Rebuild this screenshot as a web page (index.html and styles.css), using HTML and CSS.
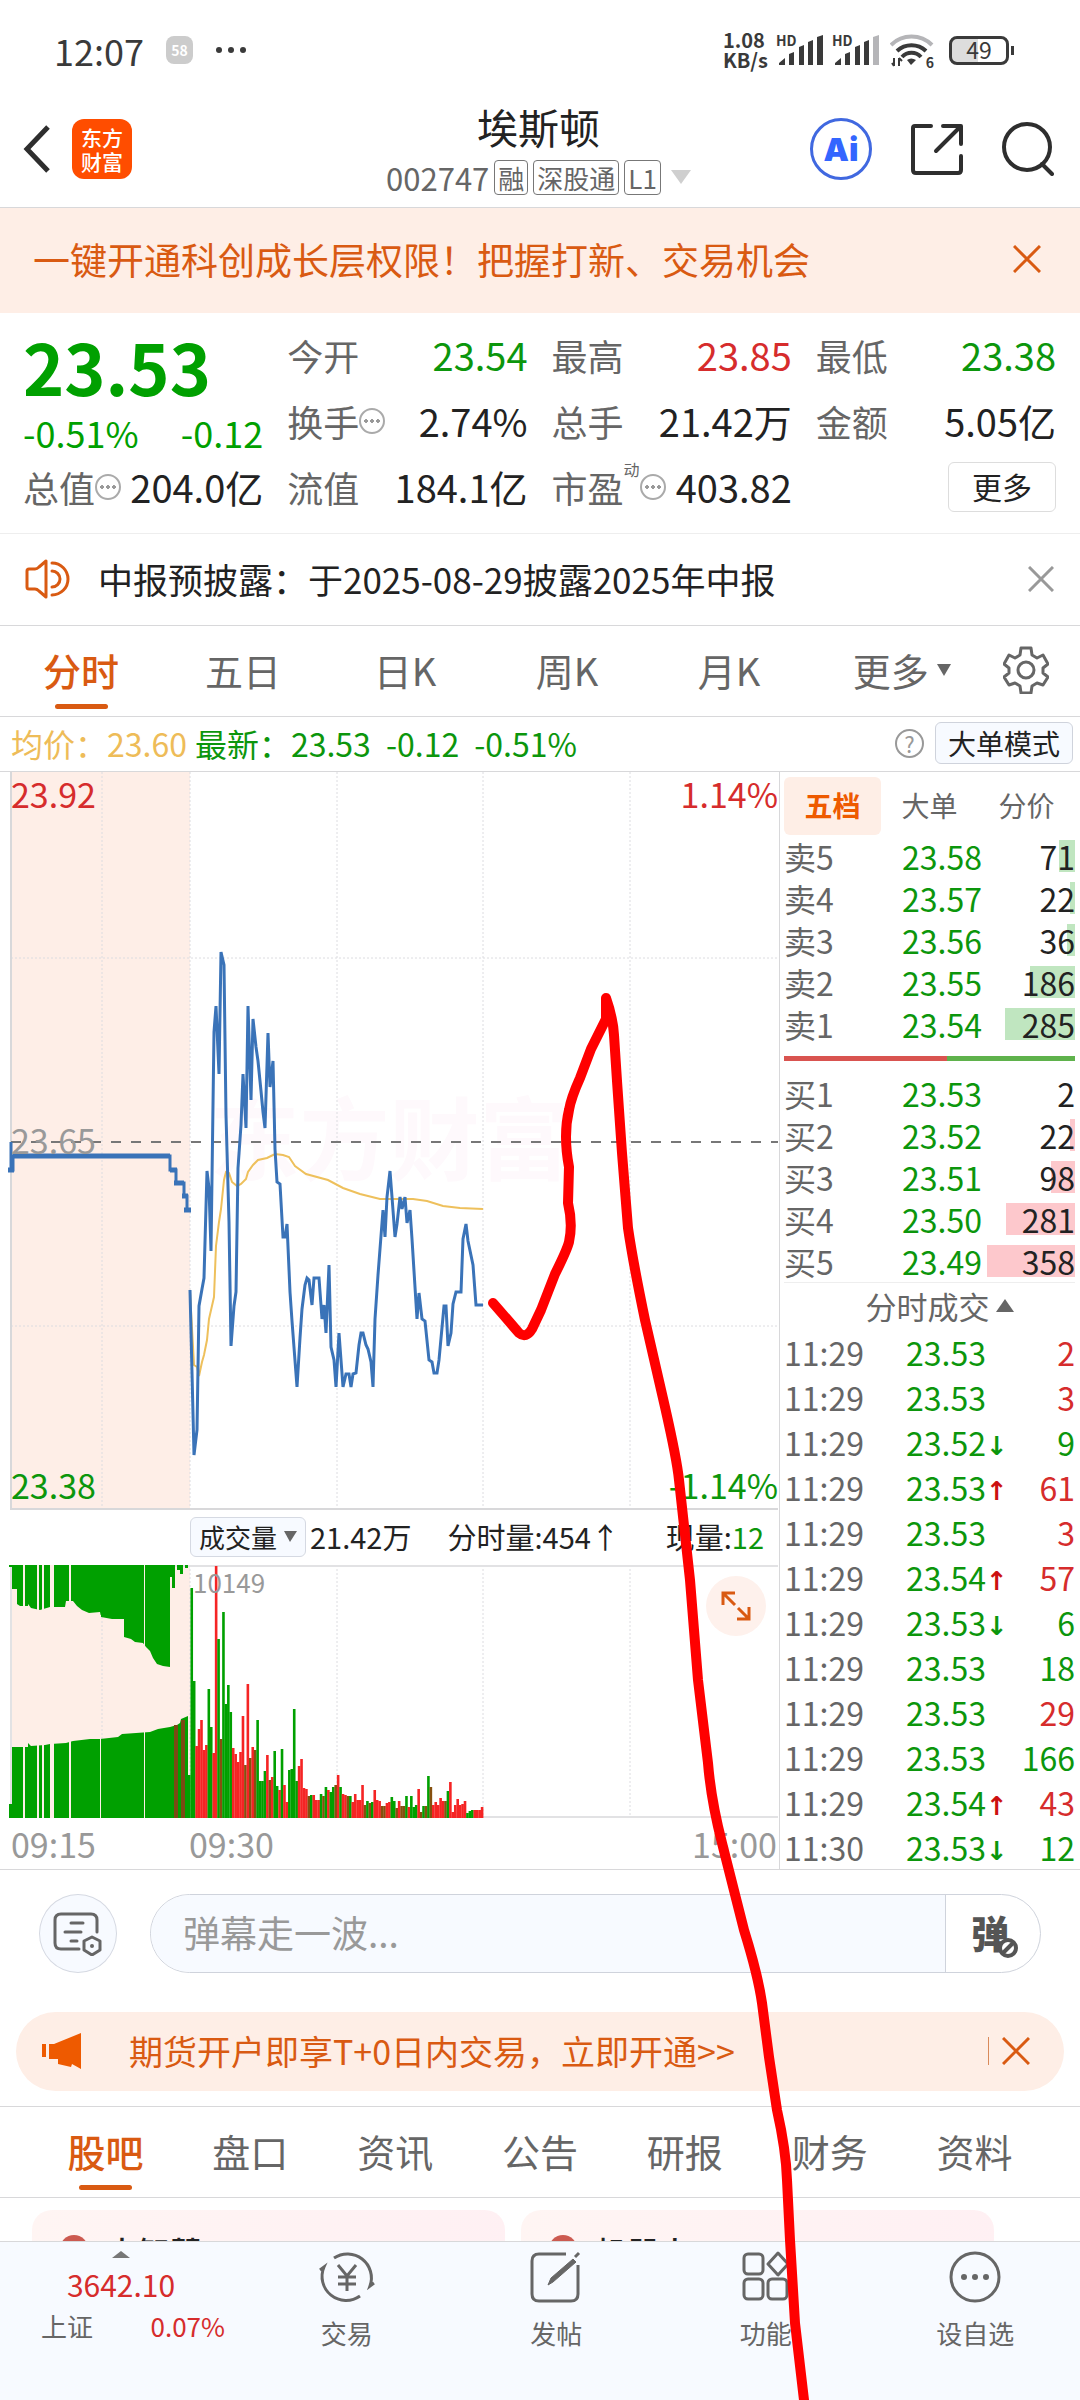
FILE: index.html
```html
<!DOCTYPE html>
<html lang="zh-CN">
<head>
    <meta charset="UTF-8">
    <meta name="viewport" content="width=device-width, initial-scale=1.0">
    <title>埃斯顿 002747</title>
    <link rel="stylesheet" href="styles.css">
</head>
<body>

<!-- Status bar -->
<div class="status">
    <div class="status-side">
        <span class="clock">12:07</span>
        <span class="app-dot">58</span>
        <svg width="32" height="8" viewBox="0 0 32 8" fill="#3a3a3a"><circle cx="4" cy="4" r="3"/><circle cx="16" cy="4" r="3"/><circle cx="28" cy="4" r="3"/></svg>
    </div>
    <div class="status-side status-right">
        <div class="net"><span>1.08</span><span>KB/s</span></div>
        <div class="signal">
            <span class="hd">HD</span>
            <svg width="46" height="30" viewBox="0 0 46 30" fill="#3a3a3a"><path d="M1 28l6-5v7h-6zM11 19l5-2v13h-5zM21 12l5-2v20h-5zM30 7l5-2v25h-5zM39 2l6-2v30h-6z"/></svg>
        </div>
        <div class="signal">
            <span class="hd">HD</span>
            <svg width="46" height="30" viewBox="0 0 46 30" fill="#3a3a3a"><path d="M1 28l6-5v7h-6zM11 19l5-2v13h-5zM21 12l5-2v20h-5zM30 7l5-2v25h-5z"/><path d="M39 2l6-2v30h-6z" fill="#b5b5b8"/></svg>
        </div>
        <div class="wifi">
            <svg width="44" height="34" viewBox="0 0 44 34" fill="none" stroke="#3a3a3a" stroke-width="4"><path d="M1 12a29 29 0 0 1 41 0" stroke="#b5b5b8"/><path d="M7 18a21 21 0 0 1 29 0"/><path d="M12 24a13 13 0 0 1 19 0"/><path d="M17 27q4-3 9 0l-5 5z" fill="#3a3a3a" stroke="none"/><path d="M4 33v-8M2 30l2 3M9 25v8M12 28l-3-3" stroke-width="2"/></svg>
            <span class="wifi-gen">6</span>
        </div>
        <div class="battery"><span>49</span></div>
    </div>
</div>

<!-- Header -->
<header class="header">
    <div class="header-left">
        <button class="plain" aria-label="返回">
            <svg width="28" height="52" viewBox="0 0 28 52" fill="none" stroke="#2e2e2e" stroke-width="5"><path d="M25 4L4 26l21 22"/></svg>
        </button>
        <a class="logo" href="#"><span>东方</span><span>财富</span></a>
    </div>
    <div class="stock">
        <h1>埃斯顿</h1>
        <div class="stock-sub">
            <span class="code">002747</span>
            <span class="tag">融</span>
            <span class="tag">深股通</span>
            <span class="tag">L1</span>
            <svg class="sub-arrow" width="20" height="14" viewBox="0 0 20 14" fill="#cfcfcf"><path d="M0 0h20L10 14z"/></svg>
        </div>
    </div>
    <div class="header-right">
        <button class="plain ai" aria-label="Ai"><span>Ai</span></button>
        <button class="plain" aria-label="分享">
            <svg width="52" height="52" viewBox="0 0 52 52" fill="none" stroke="#2e2e2e" stroke-width="4" stroke-linecap="round" stroke-linejoin="round"><path d="M20 3H4q-2 0-2 2v42q0 3 3 3h42q3 0 3-3V33"/><path d="M32 3h18v18M49 4L25 28"/></svg>
        </button>
        <button class="plain" aria-label="搜索">
            <svg width="52" height="54" viewBox="0 0 52 54" fill="none" stroke="#2e2e2e" stroke-width="4" stroke-linecap="round"><circle cx="25" cy="25" r="23"/><path d="M40 42l10 10"/></svg>
        </button>
    </div>
</header>

<!-- Promo banner -->
<div class="promo">
    <a href="#">一键开通科创成长层权限！把握打新、交易机会</a>
    <button class="plain" aria-label="关闭">
        <svg width="28" height="28" viewBox="0 0 28 28" stroke="#d95a12" stroke-width="3"><path d="M1 1l26 26M27 1L1 27"/></svg>
    </button>
</div>

<!-- Quote -->
<section class="quote">
    <div class="price-cell">
        <strong class="price">23.53</strong>
        <div class="change"><span>-0.51%</span><span>-0.12</span></div>
    </div>
    <div class="cell"><span class="label">今开</span><span class="value green">23.54</span></div>
    <div class="cell"><span class="label">最高</span><span class="value red">23.85</span></div>
    <div class="cell"><span class="label">最低</span><span class="value green">23.38</span></div>
    <div class="cell"><span class="label">换手<i class="more-dots"></i></span><span class="value">2.74%</span></div>
    <div class="cell"><span class="label">总手</span><span class="value">21.42万</span></div>
    <div class="cell"><span class="label">金额</span><span class="value">5.05亿</span></div>
    <div class="cell"><span class="label">总值<i class="more-dots"></i></span><span class="value">204.0亿</span></div>
    <div class="cell"><span class="label">流值</span><span class="value">184.1亿</span></div>
    <div class="cell"><span class="label">市盈<sup>动</sup><i class="more-dots"></i></span><span class="value">403.82</span></div>
    <div class="cell cell-end"><button class="more-btn">更多</button></div>
</section>

<!-- Notice -->
<div class="notice">
    <svg width="46" height="40" viewBox="0 0 46 40" fill="none" stroke="#d95a12" stroke-width="3" stroke-linejoin="round"><path d="M4 10h6q2 0 4-2l7-6v36l-7-6q-2-2-4-2H4q-2 0-2-2V12q0-2 2-2z"/><path d="M27 4a16 16 0 0 1 0 32" stroke-linecap="round"/><path d="M27 12a8 8 0 0 1 0 16" stroke-linecap="round"/></svg>
    <a href="#">中报预披露：于2025-08-29披露2025年中报</a>
    <button class="plain" aria-label="关闭">
        <svg width="26" height="26" viewBox="0 0 26 26" stroke="#999" stroke-width="3"><path d="M1 1l24 24M25 1L1 25"/></svg>
    </button>
</div>

<!-- Chart tabs -->
<nav class="chart-tabs">
    <a class="active" href="#">分时</a>
    <a href="#">五日</a>
    <a href="#">日K</a>
    <a href="#">周K</a>
    <a href="#">月K</a>
    <a href="#">更多<svg class="tab-arrow" width="14" height="12" viewBox="0 0 14 12" fill="#666"><path d="M0 0h14L7 12z"/></svg></a>
    <button class="plain gear" aria-label="设置">
        <svg width="46" height="48" viewBox="0 0 46 48" fill="none" stroke="#666" stroke-width="3" stroke-linejoin="round"><path d="M18 2h10l1 7 5 3 6-3 5 9-5 4v5l5 4-5 8-6-2-5 3-1 7H18l-1-7-5-3-6 2-5-8 5-4v-5l-5-4 5-9 6 3 5-3z"/><circle cx="23" cy="24" r="8"/></svg>
    </button>
</nav>

<div class="info">
    <span class="yellow">均价：23.60</span>
    <span class="green">最新：23.53</span>
    <span class="green gap">-0.12</span>
    <span class="green gap">-0.51%</span>
    <span class="help">?</span>
    <button class="mode-btn">大单模式</button>
</div>

<main class="market">
    <div class="charts">
        <div class="price-chart">
            <div class="watermark">东方财富</div>
            <svg viewBox="0 0 779 738">
                <rect x="11" y="0" width="179" height="737" fill="#feeee7"/>
                <g stroke="#dcdce0" stroke-dasharray="2 2">
                    <path d="M102 0v737M190 0v737M337 0v737M483 0v737M630 0v737M11 186h767M11 554h767"/>
                </g>
                <path d="M11 0v737h767" fill="none" stroke="#d8d8da" stroke-width="2"/>
                <path d="M11 370h767" stroke="#777" stroke-width="2" stroke-dasharray="10 10"/>
                <polyline fill="none" stroke="#eec05c" stroke-width="2" points="190,520 194,593 197,595 199,604 202,590 204,583 207,568 209,547 214,525 216,474 219,450 221,437 224,408 226,400 229,401 232,410 237,414 241,412 246,407 248,400 253,393 258,388 267,386 275,382 283,383 289,385 295,394 306,402 328,408 343,416 360,422 380,427 413,427 427,429 443,434 460,436 483,437"/>
                <polyline class="line" points="11,370 11,398 13,398 13,384 170,384 170,398 176,398 176,411 184,411 184,424 187,424 187,438"/>
                <path d="M13 384h157M8 398h6M170 398h7M174 411h10M182 424h6M184 438h7" stroke="#3a73b8" stroke-width="5" fill="none"/>
                <polyline class="line" points="190,518 194,683 197,658 199,534 202,517 204,506 207,399 209,416 211,479 214,260 216,234 219,302 221,180 224,193 226,343 229,450 231,574 234,534 236,520 238,396 241,353 243,302 246,356 248,234 251,328 253,247 256,275 258,289 261,319 263,340 265,356 268,261 270,315 273,289 275,377 277,410 280,412 283,465 285,465 287,452 290,520 292,549 297,615 300,566 302,537 305,513 307,506 309,508 312,533 314,506 319,506 322,547 324,533 326,561 329,493 331,575 334,588 336,615 339,561 343,615 346,602 349,602 351,615 353,602 356,601 359,573 361,561 363,561 366,573 368,577 371,590 373,615 375,547 378,503 383,438 385,465 387,425 390,399 392,425 395,465 397,452 400,425 402,437 405,425 407,451 410,438 412,467 417,547 419,521 422,547 425,549 429,588 432,590 434,601 437,601 439,588 444,534 446,534 448,574 451,561 453,532 456,520 461,520 463,467 466,452 468,469 473,493 476,533 483,533"/>
            </svg>
            <span class="mark top-left red">23.92</span>
            <span class="mark top-right red">1.14%</span>
            <span class="mark mid-left">23.65</span>
            <span class="mark bottom-left green">23.38</span>
            <span class="mark bottom-right green">-1.14%</span>
        </div>
        <div class="volume-info">
            <button class="volume-btn">成交量<svg width="13" height="11" viewBox="0 0 13 11" fill="#666"><path d="M0 0h13L6 11z"/></svg></button>
            <span>21.42万</span>
            <span class="minute">分时量:454↑</span>
            <span class="current">现量:<b class="green">12</b></span>
        </div>
        <div class="volume-chart">
            <svg viewBox="0 0 779 253">
                <rect x="11" y="0" width="179" height="253" fill="#feeee7"/>
                <path d="M102 0v253M190 0v253M337 0v253M483 0v253M630 0v253" stroke="#dcdce0" stroke-dasharray="2 2"/>
                <path d="M11 1h767M11 252h767M11 0v253" stroke="#e2e2e4" stroke-width="2" fill="none"/>
                <!-- call auction -->
                <g fill="#00a000">
                    <path d="M9 0v2h3v22h5v15l3 2h8v-2l3 4 9 2 10-3h15l1-6h7l4 5 5 4 7 3 11-1 1 5 11 2h12v18l7 2 4 3 8 1 3 4 4 4 3 7 4 6 6 2 7 1V12h2v11h3V0zM177 0h3v5h-3zM180 0h3v9h-3zM185 0h3v3h-3z"/>
                    <path d="M9 253v-14h3v-57h16v-4l3 3 14-1 5-1 16-1 7-2 17-2h10l18-2 4-3 28-2 8-3 12-2 7-2 3-2 1-4 7-3v102z"/>
                </g>
                <path d="M174 160h4v93h-4zM181 155h4v98h-4z" fill="#7a4a14"/>
                <path d="M23 0h2v253h-2zM37 0h2v253h-2zM42 0h2v253h-2zM50 0h4v253h-4zM69 0h2v253h-2zM144 0h1v253h-1zM100 50h1v203h-1z" fill="#feeee7"/>
                <g id="volumeBars"></g>
            </svg>
            <span class="peak">10149</span>
            <button class="plain expand" aria-label="全屏">
                <svg width="30" height="30" viewBox="0 0 30 30" fill="none" stroke="#d95a12" stroke-width="3"><path d="M2 14V2h12M2 2l12 12M28 16v12H16M28 28L17 17"/></svg>
            </button>
        </div>
        <div class="axis"><span>09:15</span><span class="open">09:30</span><span class="close">15:00</span></div>
    </div>

    <aside class="side">
        <div class="side-tabs">
            <button class="plain active">五档</button>
            <button class="plain">大单</button>
            <button class="plain">分价</button>
        </div>
        <table class="book sell">
            <tr><th>卖5</th><td>23.58</td><td><i style="width: 16px"></i><span>71</span></td></tr>
            <tr><th>卖4</th><td>23.57</td><td><i style="width: 5px"></i><span>22</span></td></tr>
            <tr><th>卖3</th><td>23.56</td><td><i style="width: 8px"></i><span>36</span></td></tr>
            <tr><th>卖2</th><td>23.55</td><td><i style="width: 45px"></i><span>186</span></td></tr>
            <tr><th>卖1</th><td>23.54</td><td><i style="width: 70px"></i><span>285</span></td></tr>
        </table>
        <div class="ratio"><div style="width: 56%"></div></div>
        <table class="book buy">
            <tr><th>买1</th><td>23.53</td><td><span>2</span></td></tr>
            <tr><th>买2</th><td>23.52</td><td><i style="width: 5px"></i><span>22</span></td></tr>
            <tr><th>买3</th><td>23.51</td><td><i style="width: 24px"></i><span>98</span></td></tr>
            <tr><th>买4</th><td>23.50</td><td><i style="width: 69px"></i><span>281</span></td></tr>
            <tr><th>买5</th><td>23.49</td><td><i style="width: 88px"></i><span>358</span></td></tr>
        </table>
        <button class="plain deals-title">分时成交<svg width="18" height="13" viewBox="0 0 18 13" fill="#666"><path d="M0 13h18L9 0z"/></svg></button>
        <table class="deals">
            <tr><th>11:29</th><td>23.53</td><td></td><td class="red">2</td></tr>
            <tr><th>11:29</th><td>23.53</td><td></td><td class="red">3</td></tr>
            <tr><th>11:29</th><td>23.52</td><td class="down"></td><td>9</td></tr>
            <tr><th>11:29</th><td>23.53</td><td class="up"></td><td class="red">61</td></tr>
            <tr><th>11:29</th><td>23.53</td><td></td><td class="red">3</td></tr>
            <tr><th>11:29</th><td>23.54</td><td class="up"></td><td class="red">57</td></tr>
            <tr><th>11:29</th><td>23.53</td><td class="down"></td><td>6</td></tr>
            <tr><th>11:29</th><td>23.53</td><td></td><td>18</td></tr>
            <tr><th>11:29</th><td>23.53</td><td></td><td class="red">29</td></tr>
            <tr><th>11:29</th><td>23.53</td><td></td><td>166</td></tr>
            <tr><th>11:29</th><td>23.54</td><td class="up"></td><td class="red">43</td></tr>
            <tr><th>11:30</th><td>23.53</td><td class="down"></td><td>12</td></tr>
        </table>
    </aside>
</main>

<!-- Bullet comments -->
<div class="danmu">
    <button class="plain danmu-set" aria-label="弹幕设置">
        <svg width="50" height="44" viewBox="0 0 50 44" fill="none" stroke="#666" stroke-width="3" stroke-linecap="round"><path d="M26 37H8q-6 0-6-6V8q0-6 6-6h30q6 0 6 6v12"/><path d="M18 11h12M12 20h16M18 29h6"/><path d="M39 25l8 4v9l-8 5-8-5v-9z" stroke-linejoin="round"/><circle cx="39" cy="34" r="2" fill="#666" stroke="none"/></svg>
    </button>
    <div class="danmu-box">
        <input type="text" placeholder="弹幕走一波..." aria-label="弹幕">
        <button class="plain danmu-switch" aria-label="关闭弹幕">弹<svg width="20" height="20" viewBox="0 0 20 20" fill="#fff" stroke="#555" stroke-width="4"><circle cx="10" cy="10" r="8"/><path d="M5 15L15 5"/></svg></button>
    </div>
</div>

<div class="futures">
    <svg width="40" height="36" viewBox="0 0 40 36" fill="#ee5a00"><path d="M0 11h4v13H0zM7 11h5L39 0v36L30 31l-1 3-13-3v-5H7z"/></svg>
    <a href="#">期货开户即享T+0日内交易，立即开通&gt;&gt;</a>
    <button class="plain" aria-label="关闭">
        <svg width="28" height="28" viewBox="0 0 28 28" stroke="#d95a12" stroke-width="3"><path d="M1 1l26 26M27 1L1 27"/></svg>
    </button>
</div>

<nav class="content-tabs">
    <a class="active" href="#">股吧</a>
    <a href="#">盘口</a>
    <a href="#">资讯</a>
    <a href="#">公告</a>
    <a href="#">研报</a>
    <a href="#">财务</a>
    <a href="#">资料</a>
</nav>

<div class="cards">
    <a class="card" href="#"><i></i>大智慧</a>
    <a class="card" href="#"><i></i>机器人</a>
</div>

<!-- Bottom bar -->
<nav class="bottom">
    <a class="index" href="#">
        <svg width="18" height="7" viewBox="0 0 18 7" fill="#777"><path d="M0 7h18L9 0z"/></svg>
        <span class="index-value">3642.10</span>
        <span class="index-row"><span>上证</span><span class="red">0.07%</span></span>
    </a>
    <a href="#">
        <svg width="58" height="52" viewBox="0 0 58 52" fill="none" stroke="#666" stroke-width="3"><path d="M16 7a24 24 0 0 1 36 28l4-3M42 45A24 24 0 0 1 6 16l-4 3"/><path d="M20 14l9 11 9-11M29 25v15M20 26h18M20 33h18"/></svg>
        交易
    </a>
    <a href="#">
        <svg width="52" height="52" viewBox="0 0 52 52" fill="none" stroke="#666" stroke-width="3"><path d="M36 3H9q-7 0-7 7v33q0 7 7 7h32q7 0 7-7V14"/><path d="M18 34l3-7L43 8l3 3-23 20z" fill="#666" stroke-width="1"/><path d="M45 6l4-4"/></svg>
        发帖
    </a>
    <a href="#">
        <svg width="48" height="52" viewBox="0 0 48 52" fill="none" stroke="#666" stroke-width="3"><rect x="2" y="3" width="19" height="20" rx="4"/><rect x="2" y="28" width="19" height="20" rx="4"/><rect x="26" y="28" width="19" height="20" rx="4"/><path d="M36 2l10 11-10 11-10-11z" stroke-linejoin="round"/></svg>
        功能
    </a>
    <a href="#">
        <svg width="52" height="52" viewBox="0 0 52 52" fill="none" stroke="#666" stroke-width="3"><circle cx="26" cy="26" r="24"/><g fill="#666" stroke="none"><circle cx="15" cy="26" r="3"/><circle cx="26" cy="26" r="3"/><circle cx="37" cy="26" r="3"/></g></svg>
        设自选
    </a>
</nav>

<!-- Hand-drawn trend -->
<div class="ink">
    <svg viewBox="0 0 1080 2400">
        <path d="M493 1303Q507 1319 519 1333Q526 1339 532 1329L541 1310L555 1274Q567 1250 569 1242Q573 1224 568 1203L569 1167Q563 1135 569 1110Q571 1098 580 1078L591 1049L606 1019L606 998Q613 1018 614 1035L617 1081L622 1153L628 1228Q633 1262 645 1320L665 1407Q677 1460 679 1480L690 1580L698 1680L708 1763Q711 1800 722 1843L744 1930Q758 1975 762 2003L769 2057L777 2110Q786 2150 787 2180L790 2240L795 2323L804 2400L806 2430"/>
    </svg>
</div>

<script>
    // one bar per minute: colour letter + height
    const volumes = "g43 g230 g137 r72 r89 r98 r68 r73 g129 g91 r65 r252 g179 b79 g206 g114 g133 g106 r70 r64 " +
        "r56 r66 r102 b53 r134 b60 r71 b68 g98 g37 g37 g47 r63 b38 r41 g67 g32 r28 g69 r33 " +
        "r16 g48 g49 g109 g37 r52 r59 r30 r29 b22 g23 r23 r18 r18 g24 b22 g31 r28 g26 g31 " +
        "b33 r43 g31 r24 r23 b22 g22 r16 r24 r18 r18 r33 b13 g17 b15 g16 r28 r18 r17 b12 " +
        "b12 r15 r16 g21 g17 b10 r17 b12 b12 g22 r11 g22 g11 g13 r29 b6 g12 b12 g42 b31 " +
        "r13 r16 r13 r20 r17 b17 g27 r36 r6 r13 r19 r13 r14 r17 g5 g7 g8 r8 r8 r8 r11";
    const colors = { g: "#00a000", r: "#f52424", b: "#85500f" };
    const group = document.getElementById("volumeBars");

    volumes.split(" ").forEach((item, i) => {
        const height = Number(item.slice(1));
        const bar = document.createElementNS("http://www.w3.org/2000/svg", "rect");
        bar.setAttribute("x", (188 + i * 2.44).toFixed(2));
        bar.setAttribute("y", 253 - height);
        bar.setAttribute("width", 2.6);
        bar.setAttribute("height", height);
        bar.setAttribute("fill", colors[item[0]]);
        group.appendChild(bar);
    });
</script>

</body>
</html>
```
FILE: styles.css
```css
* {
    box-sizing: border-box;
}

body {
    position: relative;
    min-height: 100vh;
    margin: 0;
    background-color: #fff;
    color: #222;
    font-family: "Noto Sans CJK SC", sans-serif;
    font-size: 32px;
    line-height: 1;
}

a {
    color: inherit;
    text-decoration: none;
}

button {
    font-family: inherit;
    cursor: pointer;
}

svg {
    display: block;
    flex-shrink: 0;
}

i {
    font-style: normal;
}

.plain {
    padding: 0;
    border: none;
    background: none;
    color: inherit;
}

.green {
    color: #0c960c;
}

.red {
    color: #d62c2c;
}

.yellow {
    color: #eebc58;
}

/* status bar */
.status {
    display: flex;
    justify-content: space-between;
    align-items: center;
    height: 96px;
    padding: 4px 71px 0 54px;
    color: #3a3a3a;
}

.status-side {
    display: flex;
    align-items: center;
    gap: 22px;
}

.status-right {
    gap: 10px;
}

.clock {
    font-size: 36px;
}

.app-dot {
    width: 27px;
    height: 28px;
    border-radius: 8px;
    background-color: #ccc;
    color: #fff;
    font-size: 14px;
    font-weight: bold;
    line-height: 28px;
    text-align: center;
}

.net {
    display: flex;
    flex-direction: column;
    font-size: 20px;
    font-weight: bold;
}

.signal {
    position: relative;
}

.hd {
    position: absolute;
    top: -2px;
    left: -2px;
    font-size: 14px;
    font-weight: bold;
}

.wifi {
    position: relative;
}

.wifi-gen {
    position: absolute;
    right: 0;
    bottom: -2px;
    font-size: 14px;
    font-weight: bold;
}

.battery {
    position: relative;
    width: 60px;
    height: 29px;
    margin-left: 5px;
    border: 3px solid #3a3a3a;
    border-radius: 8px;
    background: linear-gradient(to right, #ddd 48%, #fff 48%);
    font-size: 23px;
    line-height: 21px;
    text-align: center;
}

.battery::after {
    content: "";
    position: absolute;
    top: 7px;
    right: -8px;
    width: 3px;
    height: 9px;
    background-color: #3a3a3a;
}

/* header */
.header {
    display: grid;
    grid-template-columns: 1fr auto 1fr;
    align-items: center;
    height: 112px;
    padding: 0 26px 0 23px;
    border-bottom: 1px solid #d8d8da;
}

.header-left,
.header-right {
    display: flex;
    align-items: center;
    gap: 21px;
    padding-bottom: 5px;
}

.header-right {
    justify-content: flex-end;
    gap: 39px;
}

.logo {
    display: flex;
    flex-direction: column;
    align-items: center;
    justify-content: center;
    gap: 3px;
    width: 60px;
    height: 60px;
    border-radius: 12px;
    background-color: #ff4d00;
    color: #fff;
    font-size: 21px;
    font-weight: 500;
}

.stock {
    text-align: center;
}

h1 {
    margin: 0;
    font-size: 41px;
    font-weight: 400;
    line-height: 51px;
}

.stock-sub {
    display: flex;
    align-items: center;
    gap: 5px;
    height: 50px;
    color: #666;
}

.code {
    font-size: 31px;
}

.tag {
    padding: 0 3px;
    border: 1px solid #777;
    border-radius: 4px;
    font-size: 26px;
    line-height: 33px;
}

.sub-arrow {
    margin-left: 5px;
}

.ai {
    width: 62px;
    height: 62px;
    border: 3px solid #4068e0;
    border-radius: 50%;
    color: #3366ff;
    font-family: Inter, sans-serif;
    font-size: 32px;
    font-weight: 900;
}

/* promo */
.promo {
    display: flex;
    justify-content: space-between;
    align-items: center;
    height: 105px;
    padding: 0 39px 3px 33px;
    background-color: #feeee6;
    color: #d95a12;
    font-size: 37px;
}

/* quote */
.quote {
    display: grid;
    grid-template-columns: repeat(4, 1fr);
    grid-auto-rows: 66px;
    column-gap: 24px;
    padding: 9px 24px 13px 23px;
    border-bottom: 1px solid #eee;
}

.price-cell {
    grid-row: span 2;
    color: #00a000;
}

.price {
    display: block;
    font-size: 70px;
    font-weight: 700;
    line-height: 88px;
}

.change {
    display: flex;
    justify-content: space-between;
    font-size: 36px;
    line-height: 44px;
}

.cell {
    display: flex;
    justify-content: space-between;
    align-items: center;
    white-space: nowrap;
}

.cell-end {
    justify-content: flex-end;
}

.label {
    display: flex;
    align-items: center;
    color: #666;
    font-size: 36px;
}

.label sup {
    align-self: flex-start;
    margin-top: -8px;
    font-size: 16px;
    line-height: 1;
}

.more-dots {
    width: 26px;
    height: 26px;
    border: 2px solid #aaa;
    border-radius: 50%;
    background: radial-gradient(circle, #999 2px, transparent 2px) center / 6px 6px content-box;
    padding: 8px 2px;
}

.value {
    font-size: 38px;
}

.more-btn {
    width: 108px;
    height: 50px;
    padding: 0 0 2px;
    border: 1px solid #ddd;
    border-radius: 6px;
    background-color: #fff;
    color: #222;
    font-size: 30px;
}

/* notice */
.notice {
    display: flex;
    align-items: center;
    height: 92px;
    padding: 0 26px 2px 25px;
    border-bottom: 1px solid #d8d8da;
    font-size: 35px;
}

.notice a {
    flex: 1;
    margin-left: 27px;
}

/* chart tabs */
.chart-tabs {
    display: grid;
    grid-template-columns: repeat(5, 15%) 17% 8%;
    height: 91px;
    padding-bottom: 3px;
    border-bottom: 1px solid #d8d8da;
    color: #666;
    font-size: 38px;
}

.chart-tabs a,
.content-tabs a {
    position: relative;
    display: flex;
    align-items: center;
    justify-content: center;
}

.chart-tabs .active,
.content-tabs .active {
    color: #d95a12;
    font-weight: 500;
}

.chart-tabs .active::after,
.content-tabs .active::after {
    content: "";
    position: absolute;
    bottom: 4px;
    width: 53px;
    height: 5px;
    border-radius: 3px;
    background-color: #d95a12;
}

.tab-arrow {
    margin-left: 8px;
}

.gear {
    padding-left: 9px;
}

/* chart info */
.info {
    display: flex;
    align-items: center;
    height: 55px;
    padding: 0 7px 2px 11px;
    border-bottom: 1px solid #d8d8da;
    font-size: 32px;
    white-space: nowrap;
}

.info .green {
    margin-left: 8px;
}

.info .gap {
    margin-left: 15px;
}

.help {
    width: 29px;
    height: 29px;
    margin-left: auto;
    border: 2px solid #999;
    border-radius: 50%;
    color: #999;
    font-size: 22px;
    line-height: 24px;
    text-align: center;
}

.mode-btn {
    height: 42px;
    margin-left: 11px;
    padding: 0 12px;
    border: 1px solid #cfd3dc;
    border-radius: 6px;
    background-color: #f7faff;
    color: #222;
    font-size: 28px;
    line-height: 38px;
}

/* market */
.market {
    display: grid;
    grid-template-columns: 1fr 301px;
    border-bottom: 1px solid #d8d8da;
}

.price-chart,
.volume-chart {
    position: relative;
}

.price-chart svg {
    position: relative;
}

.line {
    fill: none;
    stroke: #3a73b8;
    stroke-width: 3;
}

.watermark {
    position: absolute;
    top: 43%;
    width: 100%;
    color: #fef9fc;
    font-size: 90px;
    font-weight: bold;
    text-align: center;
}

.mark {
    position: absolute;
    color: #999;
    font-size: 34px;
}

.top-left {
    top: 5px;
    left: 11px;
}

.top-right {
    top: 5px;
    right: 1px;
}

.mid-left {
    top: 351px;
    left: 11px;
}

.bottom-left {
    bottom: 8px;
    left: 11px;
}

.bottom-right {
    right: 1px;
    bottom: 8px;
}

.mark.red {
    color: #d62c2c;
}

.mark.green {
    color: #0c960c;
}

.volume-info {
    display: flex;
    align-items: center;
    height: 55px;
    padding: 0 15px 2px 190px;
    font-size: 29px;
    white-space: nowrap;
}

.volume-btn {
    display: flex;
    align-items: center;
    gap: 7px;
    height: 40px;
    margin-right: 4px;
    padding: 0 8px;
    border: 1px solid #d5d9e2;
    border-radius: 6px;
    background-color: #f7faff;
    color: #222;
    font-size: 26px;
}

.minute {
    margin-left: 36px;
}

.current {
    margin-left: auto;
}

.current b {
    font-weight: 400;
}

.peak {
    position: absolute;
    top: 4px;
    left: 193px;
    color: #999;
    font-size: 26px;
}

.expand {
    position: absolute;
    top: 11px;
    right: 13px;
    display: flex;
    align-items: center;
    justify-content: center;
    width: 60px;
    height: 60px;
    border-radius: 50%;
    background-color: #fef1ec;
}

.axis {
    display: flex;
    padding: 0 2px 0 11px;
    color: #999;
    font-size: 34px;
    line-height: 51px;
}

.open {
    margin-left: 93px;
}

.close {
    margin-left: auto;
}

/* order book */
.side {
    padding: 5px 5px 0 4px;
    border-left: 1px solid #d8d8da;
}

.side-tabs {
    display: flex;
    height: 58px;
    color: #666;
}

.side-tabs button {
    flex: 1;
    padding-bottom: 2px;
    font-size: 28px;
}

.side-tabs .active {
    border-radius: 6px;
    background-color: #feeee6;
    color: #ee5a00;
    font-weight: bold;
}

table {
    width: 100%;
    border-collapse: collapse;
    table-layout: fixed;
    font-size: 32px;
    white-space: nowrap;
}

th,
td {
    padding: 0;
    font-weight: 400;
    text-align: right;
}

th {
    width: 76px;
    color: #666;
    text-align: left;
}

td {
    color: #0c960c;
}

.book tr {
    height: 42px;
}

.book td:last-child {
    position: relative;
    width: 93px;
    color: #222;
}

.book td span {
    position: relative;
}

.book i {
    position: absolute;
    top: 5px;
    right: 0;
    height: 32px;
}

.sell i {
    background-color: #c0e6c0;
}

.buy i {
    background-color: #fdc8cc;
}

.ratio {
    height: 5px;
    margin: 11px 0;
    background-color: #5fb24c;
}

.ratio div {
    height: 5px;
    background-color: #d95450;
}

.deals-title {
    display: flex;
    align-items: center;
    justify-content: center;
    gap: 6px;
    width: 100%;
    height: 47px;
    padding: 0 0 2px 20px;
    border-top: 1px solid #eee;
    color: #666;
    font-size: 31px;
}

.deals tr {
    height: 45px;
}

.deals td:nth-child(3) {
    width: 20px;
    text-align: center;
}

.deals td:last-child {
    width: 69px;
}

.deals td.red {
    color: #d62c2c;
}

.up::before,
.down::before {
    content: "↑";
    font-family: "Noto Sans", "DejaVu Sans", sans-serif;
    color: #cc1010;
    font-size: 26px;
    font-weight: bold;
}

.down::before {
    content: "↓";
    color: #0c960c;
}

/* bullet comments */
.danmu {
    display: flex;
    gap: 33px;
    padding: 24px 39px 39px;
}

.danmu-set {
    display: flex;
    align-items: center;
    justify-content: center;
    width: 78px;
    height: 79px;
    border: 1px solid #d5d9e2;
    border-radius: 50%;
    background-color: #f7faff;
}

.danmu-box {
    display: flex;
    flex: 1;
    height: 79px;
    overflow: hidden;
    border: 1px solid #cfd3dc;
    border-radius: 40px;
}

.danmu-box input {
    flex: 1;
    min-width: 0;
    padding: 0 32px 4px;
    border: none;
    border-right: 1px solid #cfd3dc;
    background-color: #f7faff;
    font-family: inherit;
    font-size: 37px;
}

.danmu-box input::placeholder {
    color: #999;
}

.danmu-switch {
    position: relative;
    width: 94px;
    padding: 0 6px 4px 0;
    color: #555;
    font-size: 38px;
    font-weight: 900;
}

.danmu-switch svg {
    position: absolute;
    right: 22px;
    bottom: 14px;
}

.futures {
    display: flex;
    align-items: center;
    height: 79px;
    margin: 0 16px 15px;
    padding: 0 34px 2px 26px;
    border-radius: 40px;
    background-color: #feeee6;
    color: #d95a12;
    font-size: 34px;
}

.futures a {
    flex: 1;
    margin-left: 47px;
}

.futures button {
    padding-left: 13px;
    border-left: 1px solid #d98a5a;
}

/* content tabs */
.content-tabs {
    display: flex;
    height: 92px;
    padding: 0 33px 3px;
    border-top: 1px solid #d8d8da;
    border-bottom: 1px solid #d8d8da;
    color: #666;
    font-size: 38px;
}

.content-tabs a {
    flex: 1;
}

.cards {
    display: flex;
    gap: 16px;
    padding: 12px 86px 0 32px;
}

.card {
    display: flex;
    flex: 1;
    gap: 18px;
    height: 160px;
    padding: 25px 28px;
    border-radius: 20px;
    background: linear-gradient(100deg, #fff5f3, #fff0f3);
    font-size: 32px;
    font-weight: 500;
}

.card i {
    width: 28px;
    height: 28px;
    border-radius: 50%;
    background-color: #cc5a50;
}

/* bottom bar */
.bottom {
    position: fixed;
    right: 0;
    bottom: 0;
    left: 0;
    display: flex;
    height: 159px;
    border-top: 1px solid #d8d8da;
    background-color: #f7faff;
    color: #666;
    font-size: 26px;
}

.bottom a {
    display: flex;
    flex: 1;
    flex-direction: column;
    align-items: center;
    gap: 17px;
    padding-top: 9px;
}

.bottom .index {
    flex: 0 0 242px;
    gap: 13px;
}

.index-value {
    color: #d62c2c;
    font-size: 30px;
    line-height: 26px;
}

.index-row {
    display: flex;
    justify-content: space-between;
    width: 208px;
    padding: 3px 0 0 24px;
}

/* hand-drawn line over the page */
.ink {
    position: absolute;
    top: 0;
    left: 0;
    width: 100%;
    height: 100%;
    overflow: hidden;
    pointer-events: none;
}

.ink svg {
    width: 100%;
    overflow: visible;
    fill: none;
    stroke: #f00;
    stroke-width: 10;
    stroke-linecap: round;
    stroke-linejoin: round;
}
```
